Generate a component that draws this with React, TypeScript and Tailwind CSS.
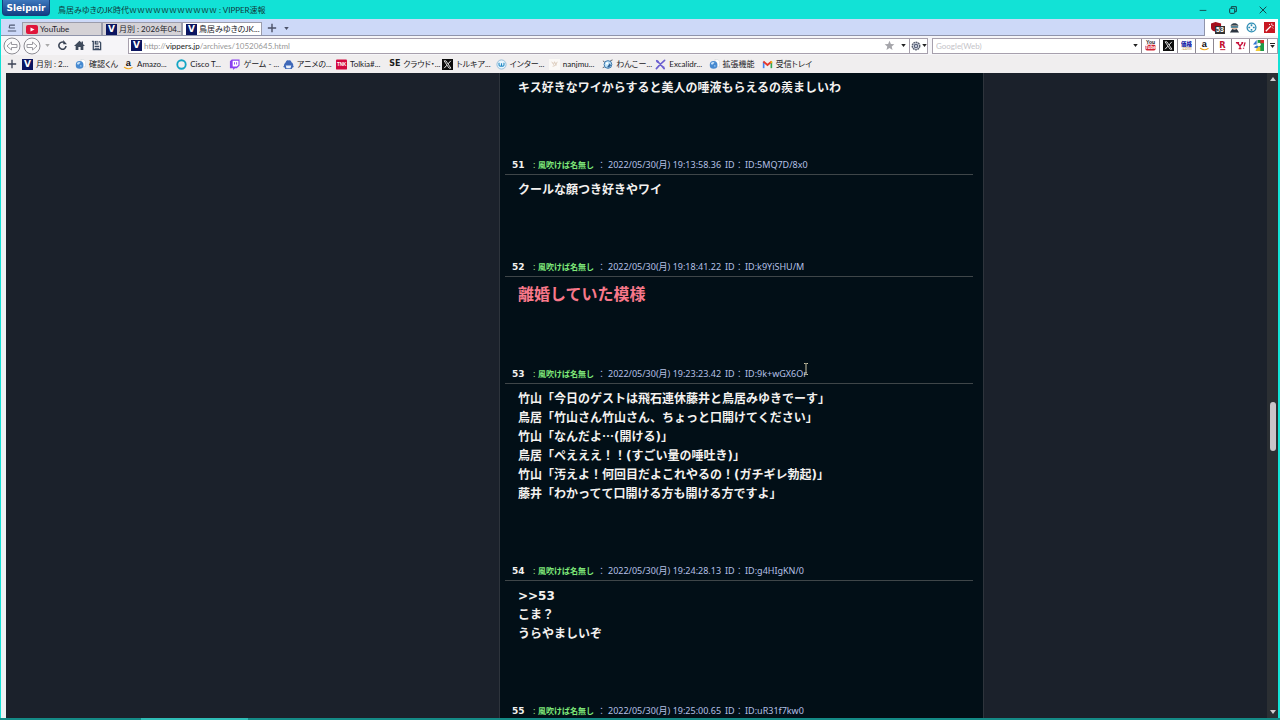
import { useState, type ReactNode } from 'react';

const UI_FONT = "font-['Lato','Noto_Sans_CJK_JP',sans-serif]";
const PAGE_FONT = "font-['Noto_Sans','Noto_Sans_CJK_JP',sans-serif]";

interface Post {
  no: number;
  time: string;
  id: string;
  lines: string[];
  large?: boolean;
  cursor?: boolean;
}

const POSTS: Post[] = [
  { no: 51, time: '19:13:58.36', id: '5MQ7D/8x0', lines: ['クールな顔つき好きやワイ'] },
  { no: 52, time: '19:18:41.22', id: 'k9YiSHU/M', lines: ['離婚していた模様'], large: true },
  {
    no: 53,
    time: '19:23:23.42',
    id: '9k+wGX6Or',
    cursor: true,
    lines: [
      '竹山「今日のゲストは飛石連休藤井と鳥居みゆきでーす」',
      '鳥居「竹山さん竹山さん、ちょっと口開けてください」',
      '竹山「なんだよ…(開ける)」',
      '鳥居「ペえええ！！(すごい量の唾吐き)」',
      '竹山「汚えよ！何回目だよこれやるの！(ガチギレ勃起)」',
      '藤井「わかってて口開ける方も開ける方ですよ」',
    ],
  },
  { no: 54, time: '19:24:28.13', id: 'g4HIgKN/0', lines: ['>>53', 'こま？', 'うらやましいぞ'] },
  { no: 55, time: '19:25:00.65', id: 'uR31f7kw0', lines: [] },
];

function Svg({ size = 'size-[11px]', box = '0 0 12 12', children }: { size?: string; box?: string; children: ReactNode }) {
  return (
    <svg viewBox={box} className={`${size} shrink-0`} fill="none" aria-hidden="true">
      {children}
    </svg>
  );
}

function VIcon() {
  return (
    <span className="flex size-[11px] shrink-0 items-center justify-center bg-[#0b1560] font-['DejaVu_Sans',sans-serif] text-[9px] leading-none font-bold text-white">
      V
    </span>
  );
}

function XIcon() {
  return (
    <Svg>
      <rect width="12" height="12" fill="#0c0c0c" />
      <path d="M2.3 2h2l5.4 8h-2z" stroke="#fff" strokeWidth=".9" />
      <path d="M9.6 2 6.7 5.3M5.3 6.8 2.4 10" stroke="#fff" strokeWidth="1" />
    </Svg>
  );
}

function AmazonIcon() {
  return (
    <Svg>
      <text x="3" y="8" fontSize="10" fontWeight="700" fontFamily="Liberation Sans" fill="#111">a</text>
      <path d="M1.5 9c2.6 2 6 2 8.5.3" stroke="#f2a71b" strokeWidth="1.2" strokeLinecap="round" />
    </Svg>
  );
}

function GlobeIcon() {
  return (
    <Svg>
      <path d="M6.5.5h3l2 2v6h-5z" fill="#fdfdfd" stroke="#c9ccd2" strokeWidth=".5" />
      <circle cx="5" cy="6.5" r="4.2" fill="#4689d0" />
      <path d="M2.2 4.4c1.5-1.5 3.2-1.4 3.6-.6.3 1-1.3 1-1.7 2-.6.8-2 .2-1.9-1.4z" fill="#c9e4fa" />
      <path d="M5.5 6.5c1.5-.3 2.3.6 1.6 1.7-.6.9-1.5.9-1.6-1.7z" fill="#8fbdea" />
    </Svg>
  );
}

const BOOKMARKS: { label: string; icon: ReactNode }[] = [
  { label: '月別 : 2...', icon: <VIcon /> },
  { label: '確認くん', icon: <GlobeIcon /> },
  { label: 'Amazo...', icon: <AmazonIcon /> },
  { label: 'Cisco T...', icon: <Svg><circle cx="6" cy="6" r="4.6" stroke="#13a5c4" strokeWidth="2" /></Svg> },
  {
    label: 'ゲーム - ...',
    icon: (
      <Svg>
        <path d="M3 .5h8.5V7L8.5 10h-2L4.5 12v-2H1V2.500z" fill="#8a3ff0" />
        <path d="M4 1.800h6.300v4.700L8.500 8.300H4z" fill="#fff" />
        <path d="M6 3.500v2.500M8.300 3.500v2.500" stroke="#8a3ff0" />
      </Svg>
    ),
  },
  {
    label: 'アニメの...',
    icon: (
      <Svg>
        <path d="M1 7.5C1 5 2.500 4 3 3.500 3.500 1.500 5 1 6 1.500 8 .8 9 2 9.200 3.500 10.500 4.200 11.500 5.500 11.200 8L9.500 11h-7z" fill="#3f68b8" />
        <path d="M3 7.200h6L8.200 10H3.800z" fill="#e6eefb" />
        <path d="M.5 8.300h2M9.500 8.300h2" stroke="#3f68b8" strokeWidth="1.2" />
      </Svg>
    ),
  },
  {
    label: 'Tolkia#...',
    icon: (
      <Svg>
        <rect y=".5" width="12" height="11" rx="1" fill="#d3093f" />
        <text x="1" y="7.6" fontSize="5" fontWeight="700" fontFamily="Liberation Sans" fill="#fff">TNK</text>
      </Svg>
    ),
  },
  {
    label: 'クラウド・...',
    icon: <span className="w-[11px] font-['DejaVu_Sans',sans-serif] text-[8px] font-bold text-[#1c1c1c]">SE</span>,
  },
  { label: 'トルキア...', icon: <XIcon /> },
  {
    label: 'インター...',
    icon: (
      <Svg>
        <circle cx="6" cy="6" r="5" fill="#e9f6fd" stroke="#8fb9d6" />
        <path d="M3.3 4v2.500a1.300 1.300 0 0 0 2.700 0V4.500M6 6.500a1.300 1.300 0 0 0 2.700 0V4" stroke="#2389c4" strokeWidth="1.200" />
      </Svg>
    ),
  },
  {
    label: 'nanjmu...',
    icon: (
      <Svg>
        <rect width="12" height="12" fill="#fbf9f6" />
        <path d="M3 3l2 3 1-3 2 4M4 8l3-1 2-4" stroke="#d8c6b4" strokeWidth=".9" />
      </Svg>
    ),
  },
  {
    label: 'わんこー...',
    icon: (
      <Svg>
        <path d="M1 2l2 1.500M.8 9.500 3 8.500M9 2l2.500-1" stroke="#3c4654" strokeWidth=".9" />
        <circle cx="6.5" cy="6" r="4.2" fill="#bfe2f7" stroke="#2f6fa6" />
        <path d="M5.500 9 8.500 4.500l1.300 2.500-2.300 2.300z" fill="#2a5f94" />
        <circle cx="5.500" cy="4.800" r="1.200" fill="#fff" />
      </Svg>
    ),
  },
  {
    label: 'Excalidr...',
    icon: (
      <Svg>
        <path d="M2 2c2 1.500 5 5 8 8.500M10.500 1.500C7.500 4 4.500 7 1.500 10.500" stroke="#6b5fd0" strokeWidth="1.800" strokeLinecap="round" />
        <path d="M1.500 1.500 4 2.500 2.500 4zM8 8l2.500 1" stroke="#6b5fd0" />
      </Svg>
    ),
  },
  { label: '拡張機能', icon: <GlobeIcon /> },
  {
    label: '受信トレイ',
    icon: (
      <Svg>
        <path d="M1.800 10V3" stroke="#4285f4" strokeWidth="1.800" />
        <path d="M10.200 10V3" stroke="#34a853" strokeWidth="1.800" />
        <path d="M1.500 2.800 6 6.500l4.500-3.700" stroke="#e5392d" strokeWidth="2" />
        <path d="M9.300 4.200V2.500h1.800V5" fill="#fbbc04" />
      </Svg>
    ),
  },
];

const ENGINES: { name: string; icon: ReactNode }[] = [
  {
    name: 'YouTube',
    icon: (
      <Svg>
        <text x="6" y="4.8" textAnchor="middle" fontSize="5.5" fontWeight="700" fontFamily="Liberation Sans" fill="#222">You</text>
        <rect x=".5" y="5.3" width="11" height="6.2" rx="1.6" fill="#d22331" />
        <text x="6" y="10.2" textAnchor="middle" fontSize="5" fontWeight="700" fontFamily="Liberation Sans" fill="#fff">Tube</text>
      </Svg>
    ),
  },
  { name: 'X', icon: <XIcon /> },
  {
    name: '価格.com',
    icon: (
      <Svg>
        <text x="6" y="6" textAnchor="middle" fontSize="6" fontWeight="900" fontFamily="Noto Sans CJK JP" fill="#1c1fa8">価格</text>
        <text x="6" y="11" textAnchor="middle" fontSize="5" fontFamily="Liberation Sans" fill="#b98a3c">.com</text>
      </Svg>
    ),
  },
  { name: 'Amazon', icon: <AmazonIcon /> },
  {
    name: '楽天',
    icon: (
      <Svg>
        <text x="6" y="9" textAnchor="middle" fontSize="9" fontWeight="700" fontFamily="DejaVu Sans" fill="#c4122f">R</text>
        <path d="M3.500 10.500h5.500" stroke="#c4122f" />
      </Svg>
    ),
  },
  {
    name: 'Yahoo',
    icon: (
      <Svg>
        <path d="M1 3h3.500M2.500 3l3 3.500L8.500 3M5.500 6.500V9.500M4 9.500h3M7 3h2" stroke="#c8103a" strokeWidth="1.400" />
        <path d="M11 2.500 9.800 7M9.300 8.500v1" stroke="#c8103a" strokeWidth="1.400" />
      </Svg>
    ),
  },
  {
    name: 'Google',
    icon: (
      <Svg>
        <rect x="5" y="0" width="7" height="12" fill="#1c9a49" />
        <rect x="8" y="0" width="4" height="3.500" fill="#d92b2b" />
        <path d="M0 5 4 0v5zM1 8l3-2 3 1-1 3z" fill="#2f74d0" />
        <path d="M3 11l3-4 2 1v4H3z" fill="#f0cb35" />
        <circle cx="6.500" cy="5" r="2" fill="#fff" />
      </Svg>
    ),
  },
];

function Caret({ color = 'fill-[#222]' }: { color?: string }) {
  return (
    <svg viewBox="0 0 6 4" className={`h-[3px] w-[5px] shrink-0 ${color}`} aria-hidden="true">
      <path d="M0 0h6L3 4z" />
    </svg>
  );
}

function TitleBar() {
  return (
    <header className="flex h-[19px] shrink-0 items-center bg-[#12e2d6]">
      <button
        type="button"
        className="ml-0.5 h-4 w-12 self-start rounded-b-sm border border-t-0 border-[#143f7c] bg-linear-to-b from-[#3d78bd] to-[#123f85] font-['DejaVu_Sans',sans-serif] text-[9px] leading-[14px] font-bold text-white"
      >
        Sleipnir
      </button>
      <h1 className="ml-2 text-[8px] leading-4 whitespace-nowrap text-[#103a3c]">
        <span className="[font-feature-settings:'palt']">鳥居みゆきのJK時代</span>ｗｗｗｗｗｗｗｗｗｗｗ : VIPPER速報
      </h1>
      <div className="ml-auto flex items-center gap-5 pr-3">
        <button type="button" aria-label="Minimize">
          <Svg size="size-[10px]"><path d="M2 6.500h8" stroke="#143c40" /></Svg>
        </button>
        <button type="button" aria-label="Restore">
          <Svg size="size-[10px]">
            <path d="M4 3.500V2h6v6H8.500" stroke="#143c40" strokeWidth="1.200" />
            <rect x="2" y="4" width="6" height="6" rx="1" stroke="#143c40" strokeWidth="1.200" />
          </Svg>
        </button>
        <button type="button" aria-label="Close">
          <Svg size="size-[10px]"><path d="M2 2l8 8M10 2l-8 8" stroke="#143c40" strokeWidth="1.100" /></Svg>
        </button>
      </div>
    </header>
  );
}

function Tab({ label, icon, active = false }: { label: string; icon: ReactNode; active?: boolean }) {
  return (
    <button
      type="button"
      role="tab"
      aria-selected={active}
      className={[
        'flex h-[13px] w-20 items-center gap-0.5 overflow-hidden border border-b-0 border-[#9b9cab] pl-[3px] text-[8px] leading-3 whitespace-nowrap text-[#22232b]',
        active ? 'bg-white' : 'bg-[#d5d2d6]',
      ].join(' ')}
    >
      {icon}
      <span className="[font-feature-settings:'palt']">{label}</span>
    </button>
  );
}

function TabBar() {
  return (
    <div className="flex h-[17px] shrink-0 bg-white">
      <div className="flex flex-1 items-end border-r border-b border-[#8f94ab] bg-[#cdd9f8]">
        <button type="button" aria-label="Tab list" className="flex h-3.5 w-[21px] items-center justify-center">
          <Svg size="size-[10px]"><path d="M4 2.500h5.500M3.500 2 2.500 6M2.500 6h7M1 9.500h10" stroke="#4c5670" strokeWidth="1.300" /></Svg>
        </button>
        <div role="tablist" className="flex">
          <Tab
            label="YouTube"
            icon={
              <Svg size="h-[9px] w-3" box="0 0 12 9">
                <rect width="12" height="9" rx="2" fill="#e0153a" />
                <path d="M4.500 2.500 8.500 4.500l-4 2z" fill="#fff" />
              </Svg>
            }
          />
          <Tab label="月別 : 2026年04..." icon={<VIcon />} />
          <Tab label="鳥居みゆきのJK..." icon={<VIcon />} active />
        </div>
        <button type="button" aria-label="New tab" className="ml-0.5 flex h-3.5 w-4 items-center justify-center">
          <Svg size="size-[10px]"><path d="M6 1v10M1 6h10" stroke="#4c5268" strokeWidth="1.700" /></Svg>
        </button>
        <button type="button" aria-label="Tab menu" className="flex h-3.5 w-3 items-center justify-center">
          <Caret color="fill-[#4c5268]" />
        </button>
      </div>
      <div className="flex w-[73px] items-center justify-between pr-[3px] pl-1.5">
        <button type="button" aria-label="Blocker, 53 blocked" className="relative">
          <Svg>
            <path d="M0 1.500 5 0l6 1.500V6c0 3-2.500 4-5 5C2.500 10 0 9 0 6z" fill="#a50f1c" />
          </Svg>
          <span className="absolute top-1 left-1 bg-[#333] px-px font-['Liberation_Sans',sans-serif] text-[7px] leading-[8px] font-bold text-white">53</span>
        </button>
        <button type="button" aria-label="Agent">
          <Svg>
            <path d="M2.500 3C3 .8 9 .8 9.500 3l1 1h-9z" fill="#31424e" />
            <rect x="3" y="4" width="6" height="4" fill="#e6b99d" />
            <path d="M2 4.500h8v1.800H2z" fill="#3b7c96" />
            <path d="M1 11.500 3.500 7.500l2.500 1 2.500-1L11 11.500z" fill="#2b3440" />
          </Svg>
        </button>
        <button type="button" aria-label="Target">
          <Svg>
            <circle cx="6" cy="6" r="4.800" stroke="#2d8db4" strokeWidth="1.400" />
            <path d="M6 2.500v2M6 7.500v2M2.500 6h2M7.500 6h2" stroke="#2d8db4" strokeWidth="1.800" />
          </Svg>
        </button>
        <button type="button" aria-label="Magic wand">
          <Svg>
            <rect width="12" height="12" fill="#c81822" />
            <path d="M2 10l5.500-5.500" stroke="#fff" strokeWidth="1.500" />
            <path d="M8.500 1.500v2M10.500 4h-1.500M5.500 2.500l1 .5M10 7 9 6" stroke="#fff" />
          </Svg>
        </button>
      </div>
    </div>
  );
}

function AddressBar() {
  const [url, setUrl] = useState('http://vippers.jp/archives/10520645.html');
  const [editing, setEditing] = useState(false);
  const [, scheme, host, path] = url.match(/^(\w+:\/\/)?([^/]*)(.*)$/) ?? [];

  return (
    <div className="flex h-4 flex-1 items-center border border-[#a7a0ad] bg-white pl-0.5">
      <VIcon />
      <div className="relative ml-0.5 h-full flex-1">
        <input
          type="text"
          aria-label="Address"
          value={editing ? url : ''}
          onChange={(e) => setUrl(e.target.value)}
          onFocus={() => setEditing(true)}
          onBlur={() => setEditing(false)}
          className="h-full w-full text-[8px] text-[#333] outline-none"
        />
        {!editing && (
          <span className="pointer-events-none absolute inset-y-0 left-0 text-[8px] leading-[14px] text-[#979797]">
            {scheme}<span className="text-[#222]">{host}</span>{path}
          </span>
        )}
      </div>
      <button type="button" aria-label="Add to favorites" className="mr-0.5">
        <Svg><path d="M6 .8l1.500 3.500 3.800.3-2.900 2.500.9 3.700L6 8.800l-3.300 2 .9-3.700L.7 4.600l3.800-.3z" fill="#a5a5aa" /></Svg>
      </button>
      <button type="button" aria-label="History" className="flex h-full w-3 items-center justify-center"><Caret /></button>
      <button type="button" aria-label="Engine" className="flex h-full w-[18px] items-center justify-center gap-px border-l border-[#a7a0ad]">
        <Svg size="size-[10px]">
          <circle cx="6" cy="6" r="4.500" fill="#d6dae4" stroke="#596070" strokeWidth="1.700" strokeDasharray="2.200 .7" />
          <circle cx="6" cy="6" r="2" stroke="#59637c" strokeWidth="1.300" />
        </Svg>
        <Caret />
      </button>
    </div>
  );
}

function NavBar() {
  return (
    <div className="flex h-[19px] shrink-0 items-center bg-[#f6f5f8] pl-0.5">
      <button type="button" aria-label="Back">
        <Svg size="size-[18px]" box="0 0 18 18">
          <circle cx="9" cy="9" r="8" fill="#fbfbfc" stroke="#8c8b92" />
          <path d="M4 9l4.500-4v2.500H14v3H8.500V13z" stroke="#9a99a0" fill="#fff" />
        </Svg>
      </button>
      <button type="button" aria-label="Forward" className="ml-0.5">
        <Svg size="size-[18px]" box="0 0 18 18">
          <circle cx="9" cy="9" r="8" fill="#fbfbfc" stroke="#8c8b92" />
          <path d="M14 9 9.500 5v2.500H4v3h5.500V13z" stroke="#9a99a0" fill="#fff" />
        </Svg>
      </button>
      <button type="button" aria-label="Back history" className="flex w-3 justify-center"><Caret color="fill-[#aaa]" /></button>
      <button type="button" aria-label="Reload" className="ml-1">
        <Svg>
          <path d="M9.800 6.500A3.900 3.900 0 1 1 7.500 2.600" stroke="#3a4354" strokeWidth="1.700" />
          <path d="M6.800 0v4.500h4z" fill="#3a4354" />
        </Svg>
      </button>
      <button type="button" aria-label="Home" className="ml-1.5">
        <Svg><path d="M6 .8 0 6.500h1.800V11h3V7.500h2.400V11h3V6.500H12L9.800 4.300V1.500H8.300v1.400z" fill="#3f4a5c" /></Svg>
      </button>
      <button type="button" aria-label="Save page" className="ml-1.5">
        <Svg>
          <path d="M1 1.500h1.500v9h8V3L9 1.500" stroke="#3a4a60" strokeWidth="1.400" />
          <path d="M4 1h4v4H4z" fill="#3a4a60" />
          <path d="M4 7h5M4 9h5" stroke="#3a4a60" strokeWidth="1.200" />
          <path d="M6.500 1.500v2.500" stroke="#fff" />
        </Svg>
      </button>
      <div className="ml-[26px] flex flex-1 items-center gap-1">
        <AddressBar />
        <form className="flex h-4 items-center border border-[#a7a0ad] bg-white" onSubmit={(e) => e.preventDefault()}>
          <input
            type="search"
            aria-label="Google search"
            placeholder="Google(Web)"
            className="h-full w-[196px] pl-[3px] text-[8px] outline-none placeholder:text-[#c4c3c8]"
          />
          <button type="button" aria-label="Search options" className="flex h-full w-3 items-center justify-center"><Caret /></button>
          {ENGINES.map((engine) => (
            <button
              key={engine.name}
              type="button"
              aria-label={engine.name}
              className="flex h-full w-[18px] items-center justify-center border-l border-[#8c8790]"
            >
              {engine.icon}
            </button>
          ))}
          <button type="button" aria-label="More engines" className="flex h-full w-2.5 flex-col items-center justify-center gap-px border-l border-[#8c8790]">
            <span className="h-px w-[5px] bg-[#222]" />
            <Caret />
          </button>
        </form>
      </div>
    </div>
  );
}

function BookmarkBar() {
  return (
    <nav className="flex h-[18px] shrink-0 items-center bg-[#f0eeef]">
      <button type="button" aria-label="Add bookmark" className="flex w-[21px] justify-center">
        <Svg size="size-[10px]"><path d="M6 1v10M1 6h10" stroke="#3b4254" strokeWidth="1.600" /></Svg>
      </button>
      <ul className="grid w-[793px] grid-cols-[53px_48px_repeat(13,1fr)]">
        {BOOKMARKS.map((b) => (
          <li key={b.label}>
            <a href="#" className="flex h-4 items-center gap-[3px] text-[8px] whitespace-nowrap text-[#202024]">
              {b.icon}
              <span className="[font-feature-settings:'palt']">{b.label}</span>
            </a>
          </li>
        ))}
      </ul>
    </nav>
  );
}

function PostBody({ lines, large = false }: { lines: string[]; large?: boolean }) {
  return (
    <div
      className={[
        "pt-1.5 pb-15 pl-[13px] font-['DejaVu_Sans','Noto_Sans_CJK_JP',sans-serif] font-bold",
        large ? 'text-base leading-6 text-[#f8788a]' : 'text-xs leading-[19px] text-[#f3f1ef]',
      ].join(' ')}
    >
      {lines.map((line) => (
        <p key={line} className="whitespace-nowrap">
          {line.split(/(…)/).map((part, i) =>
            part === '…' ? <span key={i} className="font-['Noto_Sans_CJK_JP',sans-serif] leading-none">…</span> : part,
          )}
        </p>
      ))}
    </div>
  );
}

function PostItem({ post }: { post: Post }) {
  return (
    <article>
      <div className="flex border-b border-[#3f4649] pb-0.5 pl-[7px] text-[9px] leading-[14px] whitespace-nowrap text-[#b5c0e6]">
        <span className="w-[21px] font-['DejaVu_Sans',sans-serif] font-bold text-[#f3f1ef]">{post.no}</span>
        <span className="w-[5px] text-[#a5ec8b]">:</span>
        <span className="w-[57px] text-[8px] font-bold text-[#7fe87a]">風吹けば名無し</span>
        <span className="w-[13px] text-center">：</span>
        <time>2022/05/30(月) {post.time}</time>
        <span className="ml-1 w-5">ID：</span>
        <span className="relative">
          ID:{post.id}
          {post.cursor && (
            <svg viewBox="0 0 6 12" className="absolute -top-1 -right-0.5 h-3 w-1.5" fill="none" aria-hidden="true">
              <path d="M1 .5h1.500l.5.500.500-.500H5M3 1v10M1 11.500h1.500l.5-.5.5.5H5" stroke="#c9c3a4" />
            </svg>
          )}
        </span>
      </div>
      <PostBody lines={post.lines} large={post.large} />
    </article>
  );
}

function Scrollbar() {
  return (
    <div className="flex w-[11px] shrink-0 flex-col items-center bg-[#2b2f33]">
      <button type="button" aria-label="Scroll up" className="flex h-3 items-center">
        <svg viewBox="0 0 6 4" className="h-1 w-1.5 fill-[#d0cdd0]" aria-hidden="true"><path d="M0 4h6L3 0z" /></svg>
      </button>
      <div className="flex-[317]" />
      <div className="h-[49px] w-1.5 rounded-full bg-[#c9c4c9]" />
      <div className="flex-[255]" />
      <button type="button" aria-label="Scroll down" className="flex h-3 items-center">
        <svg viewBox="0 0 6 4" className="h-1 w-1.5 fill-[#d0cdd0]" aria-hidden="true"><path d="M0 0h6L3 4z" /></svg>
      </button>
    </div>
  );
}

export default function App() {
  return (
    <div className={`flex h-screen flex-col overflow-hidden bg-[#12e2d6] ${UI_FONT}`}>
      <TitleBar />
      <div className="mr-0.5 ml-px flex min-h-0 flex-1 flex-col bg-[#eef1f3]">
        <TabBar />
        <NavBar />
        <BookmarkBar />
        <div className="flex min-h-0 flex-1 pl-[5px]">
          <div className={`flex min-w-0 flex-1 overflow-hidden bg-[#1b212b] ${PAGE_FONT}`}>
            <div className="flex-[493]" />
            <main className="w-[485px] shrink-0 border-x border-[#2e343c] bg-[#020f17] pr-2.5 pl-[5px]">
              <PostBody lines={['キス好きなワイからすると美人の唾液もらえるの羨ましいわ']} />
              {POSTS.map((post) => (
                <PostItem key={post.no} post={post} />
              ))}
            </main>
            <div className="flex-[283]" />
          </div>
          <Scrollbar />
        </div>
      </div>
      <footer className="flex h-0.5 shrink-0 bg-[#148a86]">
        <div className="ml-[141px] w-[107px] bg-[#2fbcb6]" />
      </footer>
    </div>
  );
}
